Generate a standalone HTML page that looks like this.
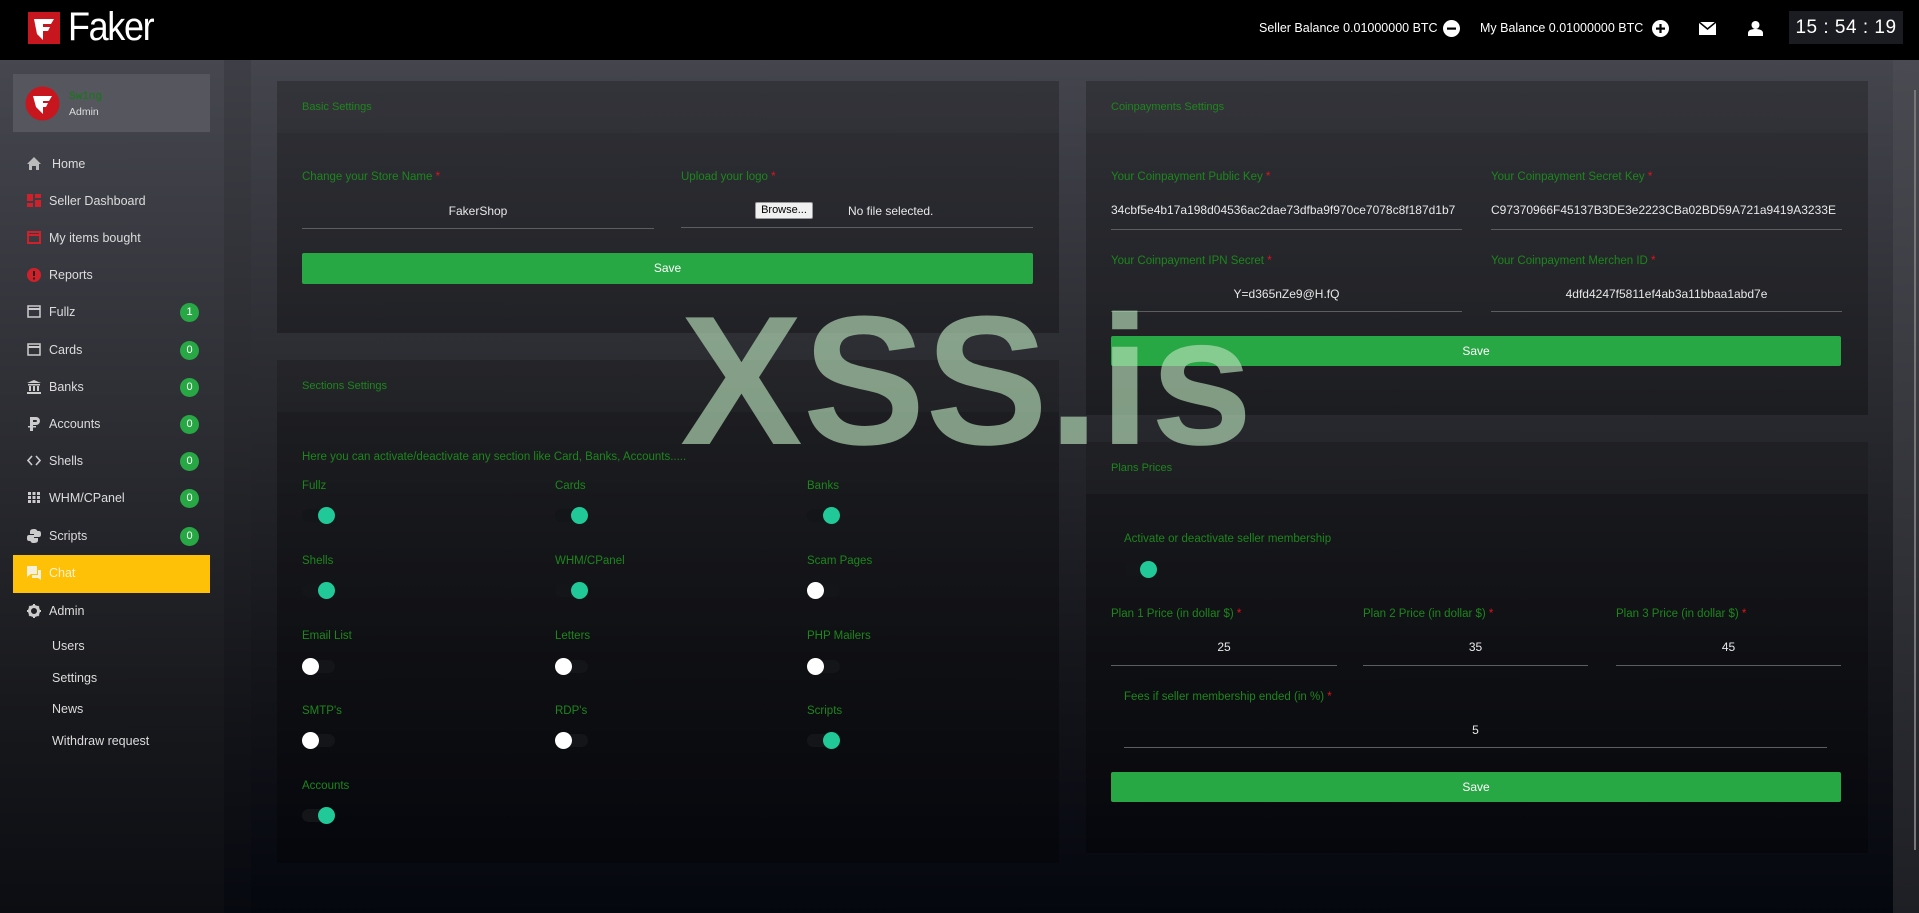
<!DOCTYPE html>
<html><head><meta charset="utf-8"><style>
*{margin:0;padding:0;box-sizing:border-box}
body{width:1919px;height:913px;overflow:hidden;font-family:"Liberation Sans",sans-serif;background:#000;position:relative}
.a{position:absolute}
#top{left:0;top:0;width:1919px;height:60px;background:#000}
#page{left:0;top:60px;width:1919px;height:853px;background:linear-gradient(#44454d 0%,#2c2d33 35%,#15161b 70%,#05070f 100%)}
#side{left:0;top:60px;width:224px;height:853px;background:linear-gradient(#46474f 0%,#2e2f35 40%,#18191d 75%,#0b0d12 100%)}
#gut{left:224px;top:60px;width:27px;height:853px;background:linear-gradient(#3e3f46,#26272c 45%,#111217 80%,#070910);}
#scr{left:1893px;top:60px;width:26px;height:853px;background:linear-gradient(#4a4b52,#34353b 50%,#1e1f24)}
#scr:after{content:"";position:absolute;left:21px;top:30px;width:2px;height:760px;background:#777}
.card{position:absolute;background:rgba(0,0,0,.28)}
.hd{position:absolute;left:0;top:0;right:0;height:52px;background:rgba(255,255,255,.025)}
.tt{position:absolute;left:25px;top:20px;color:#1d861d;font-size:11px}
.lb{position:absolute;color:#1d861d;font-size:11.5px;white-space:nowrap}
.lb i{color:#e0141e;font-style:normal}
.val{position:absolute;color:#e8e8e8;font-size:12px;text-align:center;white-space:nowrap;overflow:hidden}
.ul{position:absolute;height:1px;background:#5c5d62}
.btn{position:absolute;background:#28a745;color:#fff;font-size:12px;text-align:center;border-radius:2px}
.tg{position:absolute;width:33px;height:13px;border-radius:7px;background:#141519}
.tg b{position:absolute;top:-2px;width:17px;height:17px;border-radius:50%}
.on b{right:0;background:#20c997}.off b{left:0;background:#fff}
.mi{position:absolute;left:0;width:224px;height:20px;color:#dcdcdc;font-size:12.5px}
.mi span{position:absolute;left:49px;top:2px}
.mi svg{position:absolute;left:27px;top:2px}
.bd{position:absolute;left:180px;top:0;width:19px;height:19px;border-radius:50%;background:#28a745;color:#fff;font-size:11px;text-align:center;line-height:19px}
.tr{color:#fff;font-size:12.5px;top:21px}
</style></head><body>
<div class="a" id="top"></div>
<div class="a" id="page"></div>
<div class="a" id="side"></div>
<div class="a" id="gut"></div>
<div class="a" id="scr"></div>

<svg class="a" style="left:28px;top:12px" width="32" height="32" viewBox="0 0 32 32"><rect width="32" height="32" fill="#c8161e"/><path d="M6 7h20l-3 5h-8v3h7l-2 4h-5v9l-6-6z" fill="#fff"/></svg>
<div class="a" style="left:68px;top:5px;color:#fff;font-size:40px;letter-spacing:-1.5px;transform:scaleX(.9);transform-origin:left">Faker</div>
<div class="a tr" style="left:1259px">Seller Balance 0.01000000 BTC</div>
<svg class="a" style="left:1443px;top:20px" width="17" height="17"><circle cx="8.5" cy="8.5" r="8.5" fill="#fff"/><rect x="4" y="7.5" width="9" height="2.2" fill="#000"/></svg>
<div class="a tr" style="left:1480px">My Balance 0.01000000 BTC</div>
<svg class="a" style="left:1652px;top:20px" width="17" height="17"><circle cx="8.5" cy="8.5" r="8.5" fill="#fff"/><rect x="4" y="7.5" width="9" height="2.2" fill="#000"/><rect x="7.4" y="4" width="2.2" height="9" fill="#000"/></svg>
<svg class="a" style="left:1699px;top:22px" width="17" height="13"><rect width="17" height="13" fill="#fff"/><path d="M0 0l8.5 7 8.5-7" stroke="#000" stroke-width="1.6" fill="none"/></svg>
<svg class="a" style="left:1748px;top:20px" width="15" height="16"><circle cx="7.5" cy="5" r="4" fill="#fff"/><path d="M0 16v-3c0-3 4-4 7.5-4s7.5 1 7.5 4v3z" fill="#fff"/></svg>
<div class="a" style="left:1789px;top:11px;width:114px;height:33px;background:#1b1c21;color:#fff;font-size:19px;text-align:center;line-height:33px;letter-spacing:.5px">15 : 54 : 19</div>

<div class="a" style="left:13px;top:74px;width:197px;height:58px;background:#55565e"></div>
<svg class="a" style="left:25px;top:86px" width="35" height="35"><circle cx="17.5" cy="17.5" r="17" fill="#c8161e"/><path d="M8 10h19l-3 5h-6v2h5l-2 4h-3v7l-7-7z" fill="#fff"/></svg>
<div class="a" style="left:69px;top:91px;color:#127a12;font-size:11px;font-family:'Liberation Mono',monospace">Sw1ng</div>
<div class="a" style="left:69px;top:106px;color:#ddd;font-size:10.5px">Admin</div>

<div class="mi" style="top:155px"><svg width="14" height="13"><path d="M7 0l7 7h-2v6H9V9H5v4H2V7H0z" fill="#bbb"/></svg><span style="left:52px">Home</span></div>
<div class="mi" style="top:192px"><svg width="14" height="13"><path d="M0 0h6v7H0zM8 0h6v4H8zM8 6h6v7H8zM0 9h6v4H0z" fill="#d0202a"/></svg><span>Seller Dashboard</span></div>
<div class="mi" style="top:229px"><svg width="14" height="13"><rect x="1" y="1" width="12" height="11" fill="none" stroke="#d0202a" stroke-width="2"/><rect x="1" y="3" width="12" height="2" fill="#d0202a"/></svg><span>My items bought</span></div>
<div class="mi" style="top:266px"><svg width="14" height="14"><circle cx="7" cy="7" r="7" fill="#d0202a"/><rect x="6" y="3" width="2" height="5" fill="#222"/><rect x="6" y="9.5" width="2" height="2" fill="#222"/></svg><span>Reports</span></div>
<div class="mi" style="top:303px"><svg width="14" height="13"><rect x="1" y="1" width="12" height="11" fill="none" stroke="#ccc" stroke-width="1.5"/><rect x="1" y="3" width="12" height="2" fill="#ccc"/></svg><span>Fullz</span><div class="bd">1</div></div>
<div class="mi" style="top:341px"><svg width="14" height="13"><rect x="1" y="1" width="12" height="11" fill="none" stroke="#ccc" stroke-width="1.5"/><rect x="1" y="3" width="12" height="2" fill="#ccc"/></svg><span>Cards</span><div class="bd">0</div></div>
<div class="mi" style="top:378px"><svg width="14" height="14"><path d="M7 0l7 3H0z M1 4h12v1.5H1z M2 6h2v5H2zM6 6h2v5H6zM10 6h2v5h-2zM0 12h14v2H0z" fill="#ccc"/></svg><span>Banks</span><div class="bd">0</div></div>
<div class="mi" style="top:415px"><svg width="14" height="14"><path d="M3 0h6a4 4 0 010 8H6v6H3zM6 3v2h3a1 1 0 000-2zM1 9h8v1.5H1z" fill="#ccc"/></svg><span>Accounts</span><div class="bd">0</div></div>
<div class="mi" style="top:452px"><svg width="14" height="13"><path d="M5 2L1 6.5 5 11M9 2l4 4.5L9 11" stroke="#ccc" stroke-width="1.6" fill="none"/></svg><span>Shells</span><div class="bd">0</div></div>
<div class="mi" style="top:489px"><svg width="14" height="13"><path d="M1 1h3v3H1zM5.5 1h3v3h-3zM10 1h3v3h-3zM1 5h3v3H1zM5.5 5h3v3h-3zM10 5h3v3h-3zM1 9h3v3H1zM5.5 9h3v3h-3zM10 9h3v3h-3z" fill="#ccc"/></svg><span>WHM/CPanel</span><div class="bd">0</div></div>
<div class="mi" style="top:527px"><svg width="14" height="14"><path d="M7 0C3 0 3 2 3 3v2h4v1H2C0 6 0 8 0 9s0 3 2 3h1.5V10c0-1 1-2 2-2h3c1 0 2-1 2-2V2C10 1 9 0 7 0zM7 14c4 0 4-2 4-3V9H7V8h5c2 0 2-2 2-3s0-3-2-3h-1.5v2c0 1-1 2-2 2h-3c-1 0-2 1-2 2v4c0 1 1 2 3 2z" fill="#ccc"/></svg><span>Scripts</span><div class="bd">0</div></div>
<div class="a" style="left:13px;top:555px;width:197px;height:38px;background:#ffc107"></div>
<div class="mi" style="top:564px"><svg width="14" height="14"><path d="M0 0h10v8H4l-4 3zM11 4h3v10l-3-2H5v-3h6z" fill="#f5f0dc"/></svg><span style="color:#fdf3d0">Chat</span></div>
<div class="mi" style="top:602px"><svg width="14" height="14"><circle cx="7" cy="7" r="4.5" fill="none" stroke="#ccc" stroke-width="3"/><path d="M6 0h2v3H6zM6 11h2v3H6zM0 6h3v2H0zM11 6h3v2h-3zM1.5 3l1.5-1.5 2 2-1.5 1.5zM11 1.5l1.5 1.5-2 2L9 3.5zM1.5 11l1.5 1.5 2-2L3.5 9zM12.5 11L11 12.5l-2-2L10.5 9z" fill="#ccc"/></svg><span>Admin</span></div>
<div class="mi" style="top:637px"><span style="left:52px">Users</span></div>
<div class="mi" style="top:669px"><span style="left:52px">Settings</span></div>
<div class="mi" style="top:700px"><span style="left:52px">News</span></div>
<div class="mi" style="top:732px"><span style="left:52px">Withdraw request</span></div>

<div class="card" style="left:277px;top:81px;width:782px;height:252px"><div class="hd"></div><div class="tt">Basic Settings</div></div>
<div class="lb" style="left:302px;top:171px">Change your Store Name <i>*</i></div>
<div class="val" style="left:302px;top:204px;width:352px">FakerShop</div>
<div class="ul" style="left:302px;top:228px;width:352px"></div>
<div class="lb" style="left:681px;top:171px">Upload your logo <i>*</i></div>
<div class="a" style="left:755px;top:202px;width:58px;height:17px;background:#f0f0f0;border:1px solid #999;border-radius:2px;font-size:11px;color:#000;text-align:center;line-height:15px">Browse...</div>
<div class="val" style="left:848px;top:204px">No file selected.</div>
<div class="ul" style="left:681px;top:227px;width:352px"></div>
<div class="btn" style="left:302px;top:253px;width:731px;height:31px;line-height:31px">Save</div>

<div class="card" style="left:277px;top:360px;width:782px;height:503px"><div class="hd"></div><div class="tt">Sections Settings</div></div>
<div class="lb" style="left:302px;top:451px">Here you can activate/deactivate any section like Card, Banks, Accounts.....</div>
<div class="lb" style="left:302px;top:480px">Fullz</div><div class="tg on" style="left:302px;top:509px"><b></b></div>
<div class="lb" style="left:555px;top:480px">Cards</div><div class="tg on" style="left:555px;top:509px"><b></b></div>
<div class="lb" style="left:807px;top:480px">Banks</div><div class="tg on" style="left:807px;top:509px"><b></b></div>
<div class="lb" style="left:302px;top:555px">Shells</div><div class="tg on" style="left:302px;top:584px"><b></b></div>
<div class="lb" style="left:555px;top:555px">WHM/CPanel</div><div class="tg on" style="left:555px;top:584px"><b></b></div>
<div class="lb" style="left:807px;top:555px">Scam Pages</div><div class="tg off" style="left:807px;top:584px"><b></b></div>
<div class="lb" style="left:302px;top:630px">Email List</div><div class="tg off" style="left:302px;top:660px"><b></b></div>
<div class="lb" style="left:555px;top:630px">Letters</div><div class="tg off" style="left:555px;top:660px"><b></b></div>
<div class="lb" style="left:807px;top:630px">PHP Mailers</div><div class="tg off" style="left:807px;top:660px"><b></b></div>
<div class="lb" style="left:302px;top:705px">SMTP's</div><div class="tg off" style="left:302px;top:734px"><b></b></div>
<div class="lb" style="left:555px;top:705px">RDP's</div><div class="tg off" style="left:555px;top:734px"><b></b></div>
<div class="lb" style="left:807px;top:705px">Scripts</div><div class="tg on" style="left:807px;top:734px"><b></b></div>
<div class="lb" style="left:302px;top:780px">Accounts</div><div class="tg on" style="left:302px;top:809px"><b></b></div>

<div class="card" style="left:1086px;top:81px;width:782px;height:334px"><div class="hd"></div><div class="tt">Coinpayments Settings</div></div>
<div class="lb" style="left:1111px;top:171px">Your Coinpayment Public Key <i>*</i></div>
<div class="val" style="left:1111px;top:203px;width:351px;text-align:left">34cbf5e4b17a198d04536ac2dae73dfba9f970ce7078c8f187d1b7</div>
<div class="ul" style="left:1111px;top:229px;width:351px"></div>
<div class="lb" style="left:1491px;top:171px">Your Coinpayment Secret Key <i>*</i></div>
<div class="val" style="left:1491px;top:203px;width:351px;text-align:left">C97370966F45137B3DE3e2223CBa02BD59A721a9419A3233E</div>
<div class="ul" style="left:1491px;top:229px;width:351px"></div>
<div class="lb" style="left:1111px;top:255px">Your Coinpayment IPN Secret <i>*</i></div>
<div class="val" style="left:1111px;top:287px;width:351px">Y=d365nZe9@H.fQ</div>
<div class="ul" style="left:1111px;top:311px;width:351px"></div>
<div class="lb" style="left:1491px;top:255px">Your Coinpayment Merchen ID <i>*</i></div>
<div class="val" style="left:1491px;top:287px;width:351px">4dfd4247f5811ef4ab3a11bbaa1abd7e</div>
<div class="ul" style="left:1491px;top:311px;width:351px"></div>
<div class="btn" style="left:1111px;top:336px;width:730px;height:30px;line-height:30px">Save</div>

<div class="card" style="left:1086px;top:442px;width:782px;height:411px"><div class="hd"></div><div class="tt">Plans Prices</div></div>
<div class="lb" style="left:1124px;top:533px">Activate or deactivate seller membership</div>
<div class="tg on" style="left:1124px;top:563px"><b></b></div>
<div class="lb" style="left:1111px;top:608px">Plan 1 Price (in dollar $) <i>*</i></div>
<div class="lb" style="left:1363px;top:608px">Plan 2 Price (in dollar $) <i>*</i></div>
<div class="lb" style="left:1616px;top:608px">Plan 3 Price (in dollar $) <i>*</i></div>
<div class="val" style="left:1111px;top:640px;width:226px">25</div>
<div class="val" style="left:1363px;top:640px;width:225px">35</div>
<div class="val" style="left:1616px;top:640px;width:225px">45</div>
<div class="ul" style="left:1111px;top:665px;width:226px"></div>
<div class="ul" style="left:1363px;top:665px;width:225px"></div>
<div class="ul" style="left:1616px;top:665px;width:225px"></div>
<div class="lb" style="left:1124px;top:691px">Fees if seller membership ended (in %) <i>*</i></div>
<div class="val" style="left:1124px;top:723px;width:703px">5</div>
<div class="ul" style="left:1124px;top:747px;width:703px"></div>
<div class="btn" style="left:1111px;top:772px;width:730px;height:30px;line-height:30px">Save</div>

<div class="a" style="left:680px;top:288px;font-size:184px;font-weight:bold;color:rgba(185,225,186,.65);line-height:1;white-space:nowrap">XSS.is</div>
</body></html>
